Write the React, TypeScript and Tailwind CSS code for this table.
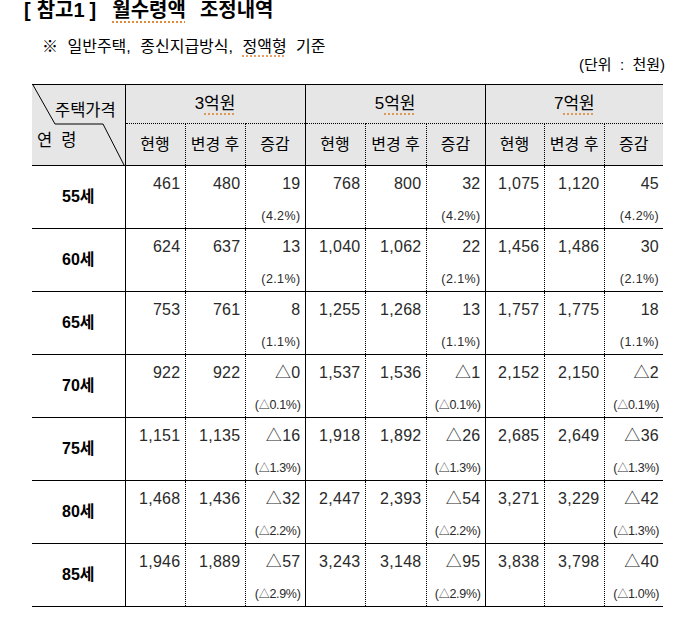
import React from "react";

type Grp = [string, string, string, string | null];
type Row = { age: string; g: Grp[] };

const rows: Row[] = [
  { age: "55세", g: [["461", "480", "19", "(4.2%)"], ["768", "800", "32", "(4.2%)"], ["1,075", "1,120", "45", "(4.2%)"]] },
  { age: "60세", g: [["624", "637", "13", "(2.1%)"], ["1,040", "1,062", "22", "(2.1%)"], ["1,456", "1,486", "30", "(2.1%)"]] },
  { age: "65세", g: [["753", "761", "8", "(1.1%)"], ["1,255", "1,268", "13", "(1.1%)"], ["1,757", "1,775", "18", "(1.1%)"]] },
  { age: "70세", g: [["922", "922", "△0", "(△0.1%)"], ["1,537", "1,536", "△1", "(△0.1%)"], ["2,152", "2,150", "△2", "(△0.1%)"]] },
  { age: "75세", g: [["1,151", "1,135", "△16", "(△1.3%)"], ["1,918", "1,892", "△26", "(△1.3%)"], ["2,685", "2,649", "△36", "(△1.3%)"]] },
  { age: "80세", g: [["1,468", "1,436", "△32", "(△2.2%)"], ["2,447", "2,393", "△54", "(△2.2%)"], ["3,271", "3,229", "△42", "(△1.3%)"]] },
  { age: "85세", g: [["1,946", "1,889", "△57", "(△2.9%)"], ["3,243", "3,148", "△95", "(△2.9%)"], ["3,838", "3,798", "△40", "(△1.0%)"]] },
];

const font = { fontFamily: '"Liberation Sans", "Noto Sans CJK KR", sans-serif' };
const spell = "underline decoration-dotted decoration-[#e08a3c] underline-offset-[4px]";

function Pct({ t }: { t: string }) {
  if (t.includes("△")) {
    const rest = t.replace("(△", "");
    return (
      <span className="text-[12.5px] leading-[16px] tracking-[-0.3px]">
        (<span className="text-[11px]">△</span>
        {rest}
      </span>
    );
  }
  return <span className="text-[12.5px] leading-[16px] tracking-[0.4px]">{t}</span>;
}

function Cell({ v, pct, solidLeft }: { v: string; pct: string | null; solidLeft: boolean }) {
  return (
    <td
      className="p-0 align-top border-y border-l border-black"
      style={solidLeft ? undefined : { borderLeftStyle: "dotted" }}
    >
      <div className="h-[62px] flex flex-col items-end justify-between pr-[4px] pt-[9px] pb-[4px] text-[#2a2a2a]">
        <span className="text-[16px] leading-[18px] tracking-[0.3px]">{v}</span>
        {pct ? <Pct t={pct} /> : <span />}
      </div>
    </td>
  );
}

export default function App() {
  const groups = ["3", "5", "7"];
  return (
    <div className="w-[678px] h-[622px] bg-white overflow-hidden text-black" style={font}>
      <div className="pl-[24px] mt-[-2px] flex items-baseline text-[20px] leading-[24px] font-bold whitespace-pre">
        <span>[</span>
        <span className="ml-[6px]">참고1</span>
        <span className="ml-[5px]">]</span>
        <span className={`ml-[16px] ${spell}`}>월수령액</span>
        <span className="ml-[14px]">조정내역</span>
      </div>
      <div className="pl-[42px] mt-[15px] text-[16px] leading-[20px] whitespace-pre [word-spacing:5px]">
        {"※ 일반주택, 종신지급방식, "}
        <span className={spell}>정액형</span>
        {" 기준"}
      </div>
      <div className="pr-[13px] mt-[-1px] text-right text-[15px] leading-[18px] whitespace-pre">(단위  :  천원)</div>
      <div className="pl-[32px] mt-[10px]">
        <table className="border-collapse table-fixed w-[631px]">
          <colgroup>
            <col className="w-[93px]" />
            <col className="w-[60px]" />
            <col className="w-[60px]" />
            <col className="w-[60px]" />
            <col className="w-[60px]" />
            <col className="w-[61px]" />
            <col className="w-[59px]" />
            <col className="w-[59px]" />
            <col className="w-[60px]" />
            <col className="w-[59px]" />
          </colgroup>
          <thead>
            <tr className="h-[39px]">
              <th rowSpan={2} className="p-0 relative bg-[#e6e6e6] border-t border-b border-black font-normal">
                <div className="relative h-[80px]">
                  <svg className="absolute inset-0" width="93" height="80" viewBox="0 0 93 80">
                    <polyline points="1,0 23,39 71,39 92,80" fill="none" stroke="#000" strokeWidth="1" />
                  </svg>
                  <span className="absolute left-[23px] top-[15px] text-[16.5px] leading-[20px] whitespace-pre">주택가격</span>
                  <span className="absolute left-[5px] top-[45px] text-[16.5px] leading-[20px] whitespace-pre">연  령</span>
                </div>
              </th>
              {groups.map((g) => (
                <th
                  key={g}
                  colSpan={3}
                  className="p-0 bg-[#e6e6e6] border-t border-l border-b border-black font-normal text-[17px]"
                  style={{ borderBottomStyle: "dotted" }}
                >
                  {g}
                  <span className={spell}>억원</span>
                </th>
              ))}
            </tr>
            <tr className="h-[42px]">
              {groups.map((g) =>
                ["현행", "변경 후", "증감"].map((t, i) => (
                  <th
                    key={g + t}
                    className="p-0 bg-[#e6e6e6] border-b border-l border-black font-normal text-[16px] whitespace-pre"
                    style={i === 0 ? undefined : { borderLeftStyle: "dotted" }}
                  >
                    {t}
                  </th>
                ))
              )}
            </tr>
          </thead>
          <tbody>
            {rows.map((r) => (
              <tr key={r.age}>
                <td className="p-0 border-y border-black text-center font-bold text-[16px]">{r.age}</td>
                {r.g.map((grp, gi) => (
                  <React.Fragment key={gi}>
                    <Cell v={grp[0]} pct={null} solidLeft={true} />
                    <Cell v={grp[1]} pct={null} solidLeft={false} />
                    <Cell v={grp[2]} pct={grp[3]} solidLeft={false} />
                  </React.Fragment>
                ))}
              </tr>
            ))}
          </tbody>
        </table>
      </div>
    </div>
  );
}
